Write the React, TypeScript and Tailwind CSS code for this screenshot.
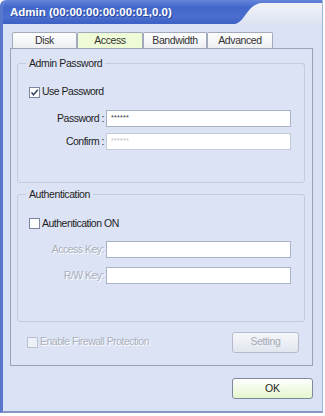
import React from 'react';

function Check({ checked, disabled }: { checked?: boolean; disabled?: boolean }) {
  return (
    <div
      className={`w-[11px] h-[11px] shrink-0 border flex items-center justify-center ${
        disabled ? 'border-[#b9c1d2] bg-[#eef1f7]' : 'border-[#7a86a0] bg-white'
      }`}
    >
      {checked && (
        <svg width="9" height="9" viewBox="0 0 9 9">
          <path d="M1.5 4.5 L3.5 6.8 L7.8 1.8" fill="none" stroke="#3b4a6a" strokeWidth="1.6" />
        </svg>
      )}
    </div>
  );
}

function Field({ label, value, disabled, dim }: { label: string; value?: string; disabled?: boolean; dim?: boolean }) {
  return (
    <div className="flex items-center h-[17px]">
      <div
        className={`w-[88px] text-right pr-[2px] text-[10.5px] tracking-[-0.5px] ${
          disabled ? 'text-[#aab0bc] [text-shadow:1px_1px_0_#fff]' : 'text-[#1e1e1e]'
        }`}
      >
        {label}
      </div>
      <div
        className={`w-[185px] h-[17px] bg-white border flex items-center pl-[4px] text-[7px] tracking-[0.3px] ${
          dim ? 'border-[#c4cad8] text-[#b8bcc6]' : 'border-[#a9b3c8] text-[#333]'
        }`}
      >
        {value}
      </div>
    </div>
  );
}

function Group({ title, className, children }: { title: string; className: string; children: React.ReactNode }) {
  return (
    <div className={`relative border border-[#c3cbdf] rounded-[3px] ${className}`}>
      <span className="absolute -top-[7px] left-[8px] px-[3px] bg-[#dce3f5] text-[10.5px] tracking-[-0.4px] text-[#1e1e1e] leading-[12px]">
        {title}
      </span>
      {children}
    </div>
  );
}

export default function App() {
  const tabs = [
    { name: 'Disk', w: 'w-[65px]' },
    { name: 'Access', w: 'w-[66px]' },
    { name: 'Bandwidth', w: 'w-[64px]' },
    { name: 'Advanced', w: 'w-[66px]' },
  ];

  return (
    <div className="w-[325px] h-[416px] bg-white font-['Liberation_Sans',Arial,sans-serif]">
      <div className="w-[323px] h-[413px] flex flex-col bg-[#d9e1f4] border-l-[3px] border-l-[#5876cc] border-r border-r-[#a3b2d8] border-b-[2px] border-b-[#8795c2] rounded-tl-[6px] overflow-hidden">
        {/* Title bar */}
        <div className="relative h-[24px] shrink-0 bg-[linear-gradient(#6585dc,#4267cb_30%,#4b6ed0_70%,#3c60c3)]">
          <svg className="absolute inset-0" width="320" height="24" viewBox="0 0 320 24">
            <defs>
              <linearGradient id="lt" x1="0" y1="0" x2="0" y2="1">
                <stop offset="0" stopColor="#f1f3f8" />
                <stop offset="1" stopColor="#dde3f2" />
              </linearGradient>
            </defs>
            <path d="M232 24 C242 22 244 5 258 3 L320 3 L320 24 Z" fill="url(#lt)" />
          </svg>
          <div className="relative pl-[7px] pt-[6px] text-[11.5px] font-bold text-white leading-[13px] [text-shadow:1px_1px_0_#2a479c]">
            Admin (00:00:00:00:00:01,0.0)
          </div>
        </div>

        {/* Body */}
        <div className="ml-[7px] mt-[8px] w-[303px]">
          <div className="flex pl-[2px] h-[16px]">
            {tabs.map((t) => (
              <div
                key={t.name}
                className={`${t.w} h-[16px] border border-b-0 border-[#a2aabb] rounded-t-[2px] flex items-center justify-center text-[10.5px] tracking-[-0.4px] text-[#333] ${
                  t.name === 'Access'
                    ? 'bg-[#effad6]'
                    : 'bg-[linear-gradient(#ffffff,#eceef2)]'
                }`}
              >
                {t.name}
              </div>
            ))}
          </div>

          <div className="h-[318px] border border-[#98a2b8] bg-[#dce3f5] pl-[6px] pr-[7px] pt-[14px]">
            <Group title="Admin Password" className="h-[120px]">
              <div className="pt-[23px] pl-[11px] flex items-center gap-[2px] h-[33px] text-[10.5px] tracking-[-0.5px] text-[#1e1e1e]">
                <Check checked />
                <span>Use Password</span>
              </div>
              <div className="mt-[13px]">
                <Field label="Password :" value="******" />
              </div>
              <div className="mt-[6px]">
                <Field label="Confirm :" value="******" dim />
              </div>
            </Group>

            <Group title="Authentication" className="h-[128px] mt-[11px]">
              <div className="pt-[23px] pl-[11px] flex items-center gap-[2px] h-[34px] text-[10.5px] tracking-[-0.5px] text-[#1e1e1e]">
                <Check />
                <span>Authentication ON</span>
              </div>
              <div className="mt-[12px]">
                <Field label="Access Key:" disabled />
              </div>
              <div className="mt-[9px]">
                <Field label="R/W Key:" disabled />
              </div>
            </Group>

            <div className="mt-[10px] h-[20px] flex items-center justify-between">
              <div className="ml-[10px] flex items-center gap-[2px] text-[10.5px] tracking-[-0.5px] text-[#aab0bc] [text-shadow:1px_1px_0_#fff]">
                <Check disabled />
                <span>Enable Firewall Protection</span>
              </div>
              <div className="mr-[6px] w-[67px] h-[21px] rounded-[3px] border border-[#b3bbcc] bg-[linear-gradient(#f6f7fa,#e1e5ee)] flex items-center justify-center text-[10.5px] tracking-[-0.4px] text-[#a5abb6]">
                Setting
              </div>
            </div>
          </div>
        </div>

        <div className="mt-[12px] ml-[229px] w-[81px] h-[21px] rounded-[3px] border border-[#7f899c] bg-[linear-gradient(#ffffff,#e4f6cc)] flex items-center justify-center text-[10.5px] text-[#1e1e1e]">
          OK
        </div>
      </div>
    </div>
  );
}
